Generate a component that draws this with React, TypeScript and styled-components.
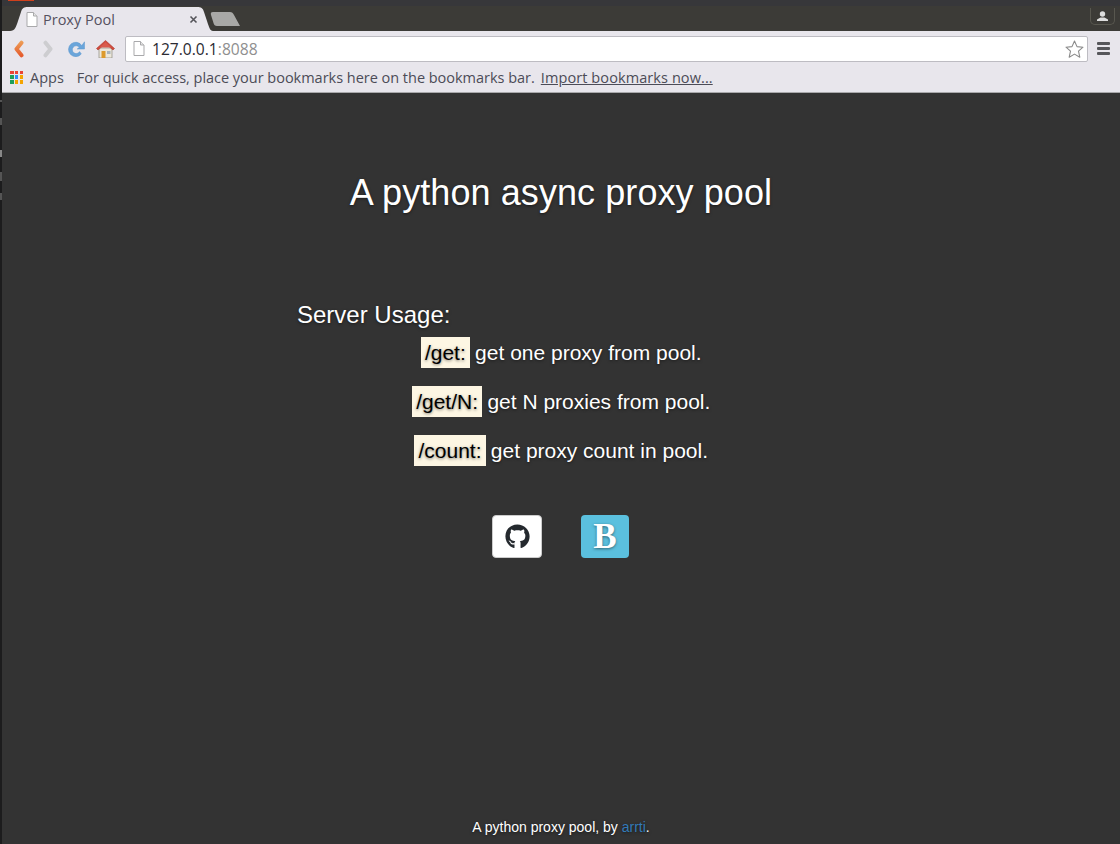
import React from "react";
import styled, { createGlobalStyle } from "styled-components";
import { FaGithub } from "react-icons/fa";

const GlobalStyle = createGlobalStyle`
  html, body {
    margin: 0;
    padding: 0;
    height: 844px;
    overflow: hidden;
    background: #333;
  }
`;

const Desktop = styled.div`
  display: flex;
  width: 1120px;
  height: 844px;
  background: linear-gradient(
    to bottom,
    #1c1c1d 100px,
    #555 100px 102px,
    #1c1c1d 102px 118px,
    #555 118px 125px,
    #1c1c1d 125px 150px,
    #888 150px 157px,
    #1c1c1d 157px 172px,
    #555 172px 181px,
    #1c1c1d 181px 193px,
    #555 193px 200px,
    #1c1c1d 200px
  );
`;

const Window = styled.div`
  flex: 1;
  margin-left: 2px;
  display: flex;
  flex-direction: column;
  min-width: 0;
`;

const TitleStrip = styled.div`
  position: relative;
  height: 6px;
  background: #37373a;
  &::before {
    content: "";
    position: absolute;
    left: 6px;
    top: 0;
    width: 26px;
    height: 1px;
    background: #d0401c;
  }
`;

const TabBar = styled.div`
  display: flex;
  align-items: flex-end;
  height: 25px;
  background: #3c3b37;
  padding-left: 8px;
  padding-right: 5px;
`;

const Tab = styled.div`
  display: flex;
  align-items: center;
  width: 203px;
  height: 24px;
  box-sizing: border-box;
  padding: 0 15px 0 16px;
  background: #e8e6ec;
  clip-path: path("M0 24 C5 24 6 20 8 14 L11 5 C12 1 14 0 18 0 L187 0 C191 0 193 1 194 5 L197 14 C199 20 200 24 203 24 Z");
  font: 14.5px "Open Sans", "Noto Sans", sans-serif;
  color: #55515f;
`;

const TabTitle = styled.span`
  flex: 1;
  margin-left: 5px;
`;

const NewTab = styled.div`
  width: 30px;
  height: 14px;
  margin: 0 0 5px -3px;
  background: #a8a8a6;
  clip-path: path("M3 0 L20 0 C22 0 23 1 24 3 L30 14 L7 14 C5 14 4 13 3.500 11 L1 3 C0.500 1 1 0 3 0 Z");
`;

const Spacer = styled.div`
  flex: 1;
`;

const ProfileButton = styled.div`
  display: flex;
  align-items: center;
  justify-content: center;
  align-self: flex-start;
  width: 25px;
  height: 17px;
  margin-top: 2px;
  box-sizing: border-box;
  border: 1px solid #58574f;
  border-top: 0;
  border-radius: 0 0 5px 5px;
`;

const Toolbar = styled.div`
  display: flex;
  align-items: center;
  height: 35px;
  background: #e8e6ec;
  padding-left: 2px;
`;

const NavIcon = styled.svg`
  flex: none;
  display: block;
`;

const NavSlot = styled.div`
  display: flex;
  align-items: center;
  justify-content: center;
  width: 29px;
  height: 24px;
`;

const Omnibox = styled.div`
  display: flex;
  align-items: center;
  width: 963px;
  height: 26px;
  margin-left: 5px;
  box-sizing: border-box;
  padding: 0 3px 0 7px;
  background: #fff;
  border: 1px solid #bdbcc2;
  border-radius: 2px;
  font: 15.6px "Open Sans", "Noto Sans", sans-serif;
  color: #2b2b33;
`;

const Host = styled.span`
  margin-left: 7px;
`;

const Port = styled.span`
  color: #8f8f8f;
`;

const Menu = styled.div`
  display: flex;
  flex-direction: column;
  gap: 2px;
  width: 13px;
  margin-left: 9px;
`;

const MenuBar = styled.div`
  height: 3px;
  border-radius: 1px;
  background: #56565a;
`;

const Bookmarks = styled.div`
  display: flex;
  align-items: center;
  height: 27px;
  box-sizing: border-box;
  background: #e8e6ec;
  border-bottom: 1px solid #a9a9ab;
  padding: 0 0 4px 8px;
  font: 14.5px "Open Sans", "Noto Sans", sans-serif;
  color: #4c4c57;
`;

const AppsGrid = styled.div`
  display: grid;
  grid-template-columns: repeat(3, 3.5px);
  grid-auto-rows: 3.5px;
  gap: 1.25px;
  margin-right: 7px;
`;

const AppsDot = styled.div<{ $color: string }>`
  background: ${(p) => p.$color};
`;

const Hint = styled.span`
  margin-left: 13px;
  letter-spacing: -0.02px;
`;

const ImportLink = styled.a`
  margin-left: 6px;
  color: #4c4c57;
  text-decoration: underline;
  letter-spacing: 0.09px;
`;

const Page = styled.main`
  flex: 1;
  display: flex;
  flex-direction: column;
  align-items: center;
  background: #333;
  color: #fff;
  font-family: "Liberation Sans", Arial, sans-serif;
  text-shadow: 0 1px 3px rgba(0, 0, 0, 0.5);
`;

const Headline = styled.h1`
  margin: 80px 0 0;
  font-size: 36px;
  font-weight: 400;
  line-height: 40px;
  letter-spacing: 0.08px;
`;

const Usage = styled.section`
  width: 528px;
  margin-top: 87px;
`;

const UsageTitle = styled.div`
  font-size: 24px;
  line-height: 30px;
`;

const Lead = styled.p`
  margin: 0 0 15px;
  font-size: 21px;
  line-height: 34px;
  text-align: center;
  &:first-of-type {
    margin-top: 6px;
  }
`;

const Route = styled.code`
  font-family: inherit;
  padding: 4px;
  margin: 0 -0.5px 0 0.5px;
  background: #fdf6e3;
  color: #000;
`;

const Links = styled.div`
  display: flex;
  align-items: center;
  gap: 39px;
  margin-top: 32px;
  margin-left: -1px;
`;

const GithubButton = styled.a`
  display: flex;
  align-items: center;
  justify-content: center;
  width: 50px;
  height: 43px;
  box-sizing: border-box;
  background: #fff;
  border: 1px solid #ccc;
  border-radius: 4px;
  color: #24292e;
`;

const BlogButton = styled.a`
  display: flex;
  align-items: center;
  justify-content: center;
  width: 48px;
  height: 43px;
  background: #5bc0de;
  border-radius: 4px;
  color: #fff;
  font: 700 35px "Liberation Serif", "Times New Roman", serif;
`;

const Footer = styled.footer`
  margin-top: auto;
  height: 27px;
  font-size: 14px;
  line-height: 20px;
`;

const FooterLink = styled.a`
  color: #337ab7;
`;

const APP_COLORS = ["#ea4335", "#ea4335", "#ea4335", "#1e9e5a", "#2f8df5", "#f4a400", "#1e9e5a", "#f4a400", "#f4a400"];

const PageIcon = () => (
  <NavIcon width="12" height="15" viewBox="0 0 12 15">
    <path d="M1 .5h6.500L11 4v10.500H1z" fill="#fff" stroke="#a9a9ab" />
    <path d="M7.500 .5V4H11" fill="#e6e6e6" stroke="#a9a9ab" />
  </NavIcon>
);

const App: React.FC = () => {
  return (
    <Desktop>
      <GlobalStyle />
      <Window>
        <TitleStrip />
        <TabBar>
          <Tab>
            <PageIcon />
            <TabTitle>Proxy Pool</TabTitle>
            <NavIcon width="9" height="9" viewBox="0 0 9 9">
              <path d="M1.500 1.500l6 6M7.500 1.500l-6 6" stroke="#55555a" strokeWidth="1.600" />
            </NavIcon>
          </Tab>
          <NewTab />
          <Spacer />
          <ProfileButton>
            <NavIcon width="11" height="10" viewBox="0 0 11 10">
              <circle cx="5.500" cy="3" r="2.700" fill="#ddd" />
              <path d="M0 10V8.500L3.500 6.500h4L11 8.500V10z" fill="#ddd" />
            </NavIcon>
          </ProfileButton>
        </TabBar>
        <Toolbar>
          <NavSlot>
            <NavIcon width="12" height="18" viewBox="0 0 12 18">
              <defs>
                <linearGradient id="backFill" gradientUnits="userSpaceOnUse" x1="0" y1="1" x2="0" y2="17">
                  <stop offset="0" stopColor="#eda058" />
                  <stop offset="1" stopColor="#e4562a" />
                </linearGradient>
              </defs>
              <path d="M8.500 2.700L3.500 9l5 6.300" fill="none" stroke="url(#backFill)" strokeWidth="4" strokeLinecap="round" strokeLinejoin="round" />
            </NavIcon>
          </NavSlot>
          <NavSlot>
            <NavIcon width="12" height="18" viewBox="0 0 12 18">
              <path d="M3.500 2.700L8.500 9l-5 6.300" fill="none" stroke="#cdcdd0" strokeWidth="4" strokeLinecap="round" strokeLinejoin="round" />
            </NavIcon>
          </NavSlot>
          <NavSlot>
            <NavIcon width="17" height="16" viewBox="0 0 17 16">
              <path d="M13.800 4.600A7.200 7.200 0 1 0 13.300 13L11.600 10.600A3.900 3.900 0 1 1 11.300 6.300L9.200 8H16.500V.8z" fill="#6aa5da" stroke="#5a96cf" strokeWidth="0.500" strokeLinejoin="round" />
            </NavIcon>
          </NavSlot>
          <NavSlot>
            <NavIcon width="19" height="18" viewBox="0 0 19 18">
              <path d="M3 8v10h13V8z" fill="#ece7da" stroke="#8e8a80" strokeWidth="0.700" />
              <path d="M5.500 11h4v7h-4z" fill="#dd9a2c" />
              <path d="M11 11h3.500v3H11z" fill="#a9b4bd" />
              <path d="M9.500 .5L.5 8.500l1.500 1.500 7.500-6.500L17 10l1.500-1.500z" fill="#cf4a3c" stroke="#b23a2e" strokeWidth="0.600" strokeLinejoin="round" />
              <path d="M9.500 2L3.500 7.500h12z" fill="#d95c4c" />
            </NavIcon>
          </NavSlot>
          <Omnibox>
            <PageIcon />
            <Host>127.0.0.1<Port>:8088</Port></Host>
            <Spacer />
            <NavIcon width="19" height="18" viewBox="0 0 19 18">
              <path d="M9.500 1l2.500 5.600 6 .6-4.500 4 1.300 6-5.300-3.100-5.300 3.100 1.300-6-4.500-4 6-.6z" fill="#fff" stroke="#8a8a8a" strokeWidth="1.100" strokeLinejoin="round" />
            </NavIcon>
          </Omnibox>
          <Menu>
            <MenuBar />
            <MenuBar />
            <MenuBar />
          </Menu>
        </Toolbar>
        <Bookmarks>
          <AppsGrid>
            {APP_COLORS.map((color, i) => (
              <AppsDot key={i} $color={color} />
            ))}
          </AppsGrid>
          <span>Apps</span>
          <Hint>For quick access, place your bookmarks here on the bookmarks bar.</Hint>
          <ImportLink>Import bookmarks now...</ImportLink>
        </Bookmarks>
        <Page>
          <Headline>A python async proxy pool</Headline>
          <Usage>
            <UsageTitle>Server Usage:</UsageTitle>
            <Lead><Route>/get:</Route> get one proxy from pool.</Lead>
            <Lead><Route>/get/N:</Route> get N proxies from pool.</Lead>
            <Lead><Route>/count:</Route> get proxy count in pool.</Lead>
          </Usage>
          <Links>
            <GithubButton><FaGithub size={25} /></GithubButton>
            <BlogButton>B</BlogButton>
          </Links>
          <Footer>A python proxy pool, by <FooterLink>arrti</FooterLink>.</Footer>
        </Page>
      </Window>
    </Desktop>
  );
};

export default App;
